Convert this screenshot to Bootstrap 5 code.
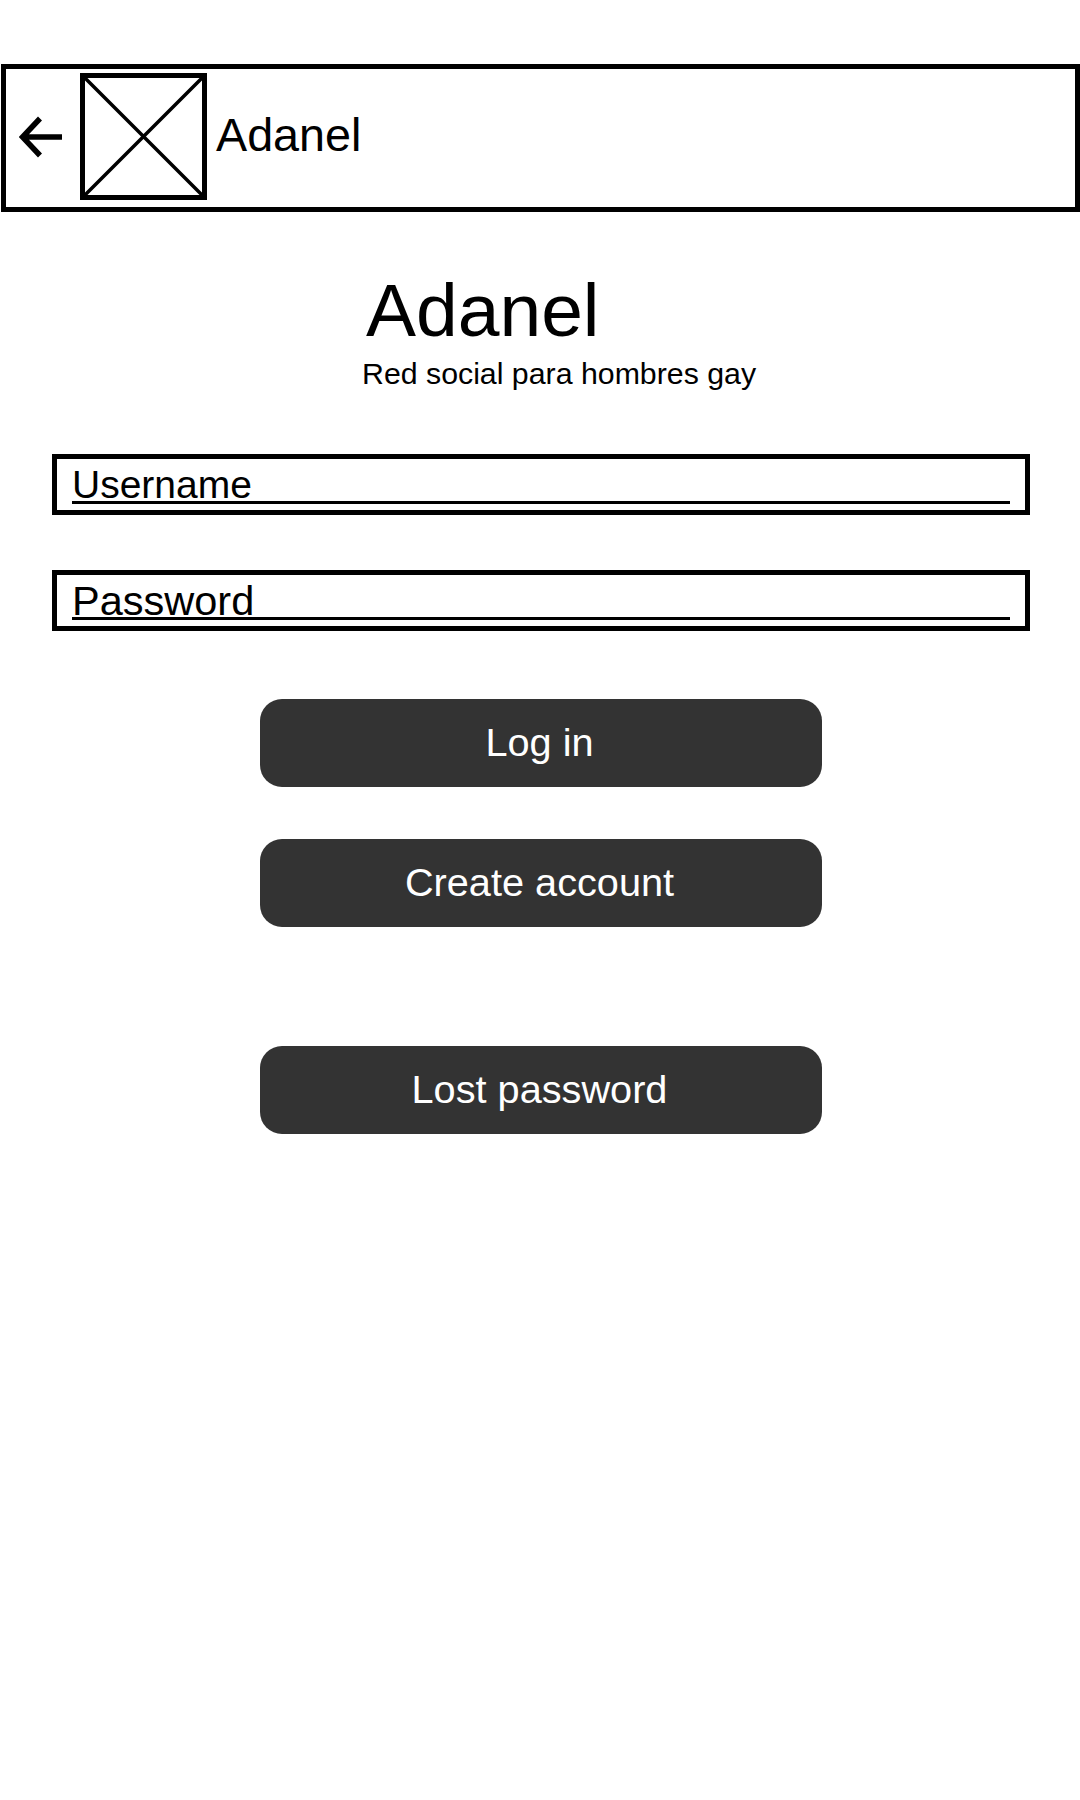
<!DOCTYPE html>
<html lang="en">
<head>
    <meta charset="UTF-8">
    <meta name="viewport" content="width=device-width, initial-scale=1.0">
    <title>Adanel</title>

    <link href="https://cdn.jsdelivr.net/npm/bootstrap@5.3.3/dist/css/bootstrap.min.css" rel="stylesheet">
    <style>
        body {
            background: #fff;
            color: #000;
            font-family: "Liberation Sans", Arial, sans-serif;
        }
        .top-bar {
            height: 148px;
            margin: 64px 0 0 1px;
            padding: 0 0 3px 13px;
            border: 5px solid #000;
        }
        .back-icon { width: 44px; height: 44px; margin-right: 17px; }
        .logo-box { width: 127px; height: 127px; margin-right: 9px; }
        .bar-title { font-size: 46.7px; line-height: 1; margin-top: -2px; }
        .brand-block { margin: 55px 0 0 362px; }
        .brand-name { font-size: 75px; line-height: 86px; margin: 0 0 0 4px; font-weight: 400; }
        .brand-tag { font-size: 30.3px; line-height: 34px; margin: 4px 0 0; }
        .login-form { margin: 63px 50px 0 52px; }
        .field-box {
            height: 61px;
            margin-bottom: 55px;
            padding: 0 15px 6px 15px;
            border: 5px solid #000;
        }
        .field-input.form-control {
            height: 45px;
            padding: 10px 0 0 0;
            font-size: 39px;
            color: #000;
            background: transparent;
            border: 0;
            border-bottom: 3px solid #000;
            border-radius: 0;
        }
        .field-input.pass-input { font-size: 41.500px; }
        .field-input.form-control::placeholder { color: #000; opacity: 1; }
        .action-btn.btn {
            width: 562px;
            height: 88px;
            padding: 0 2px 0 0;
            font-size: 39.7px;
            color: #fff;
            background: #333;
            border: 0;
            border-radius: 22px;
        }
        .actions { margin: 68px 0 0 1px; }
        .gap-create { margin-top: 52px; }
        .gap-lost { margin-top: 119px; }
    </style>
</head>
<body class="m-0">
    <div class="top-bar d-flex align-items-center">
        <svg class="back-icon flex-shrink-0" viewBox="0 0 44 44" aria-hidden="true">
            <path d="M43 22H4M21 3.500 3.500 22 21 40.500" fill="none" stroke="#000" stroke-width="5.500"/>
        </svg>
        <svg class="logo-box flex-shrink-0" viewBox="0 0 127 127" aria-hidden="true">
            <rect x="2.500" y="2.500" width="122" height="122" fill="#fff" stroke="#000" stroke-width="5"/>
            <path d="M3 3 124 124M124 3 3 124" stroke="#000" stroke-width="3.500"/>
        </svg>
        <span class="bar-title">Adanel</span>
    </div>

    <div class="brand-block">
        <h1 class="brand-name">Adanel</h1>
        <p class="brand-tag">Red social para hombres gay</p>
    </div>

    <form class="login-form">
        <div class="field-box">
            <input type="text" class="field-input form-control" placeholder="Username">
        </div>
        <div class="field-box">
            <input type="password" class="field-input pass-input form-control" placeholder="Password">
        </div>
    </form>

    <div class="actions d-flex flex-column align-items-center">
        <button type="button" class="action-btn btn">Log in</button>
        <button type="button" class="action-btn btn gap-create">Create account</button>
        <button type="button" class="action-btn btn gap-lost">Lost password</button>
    </div>

    <script src="https://cdn.jsdelivr.net/npm/bootstrap@5.3.3/dist/js/bootstrap.bundle.min.js"></script>
</body>
</html>
